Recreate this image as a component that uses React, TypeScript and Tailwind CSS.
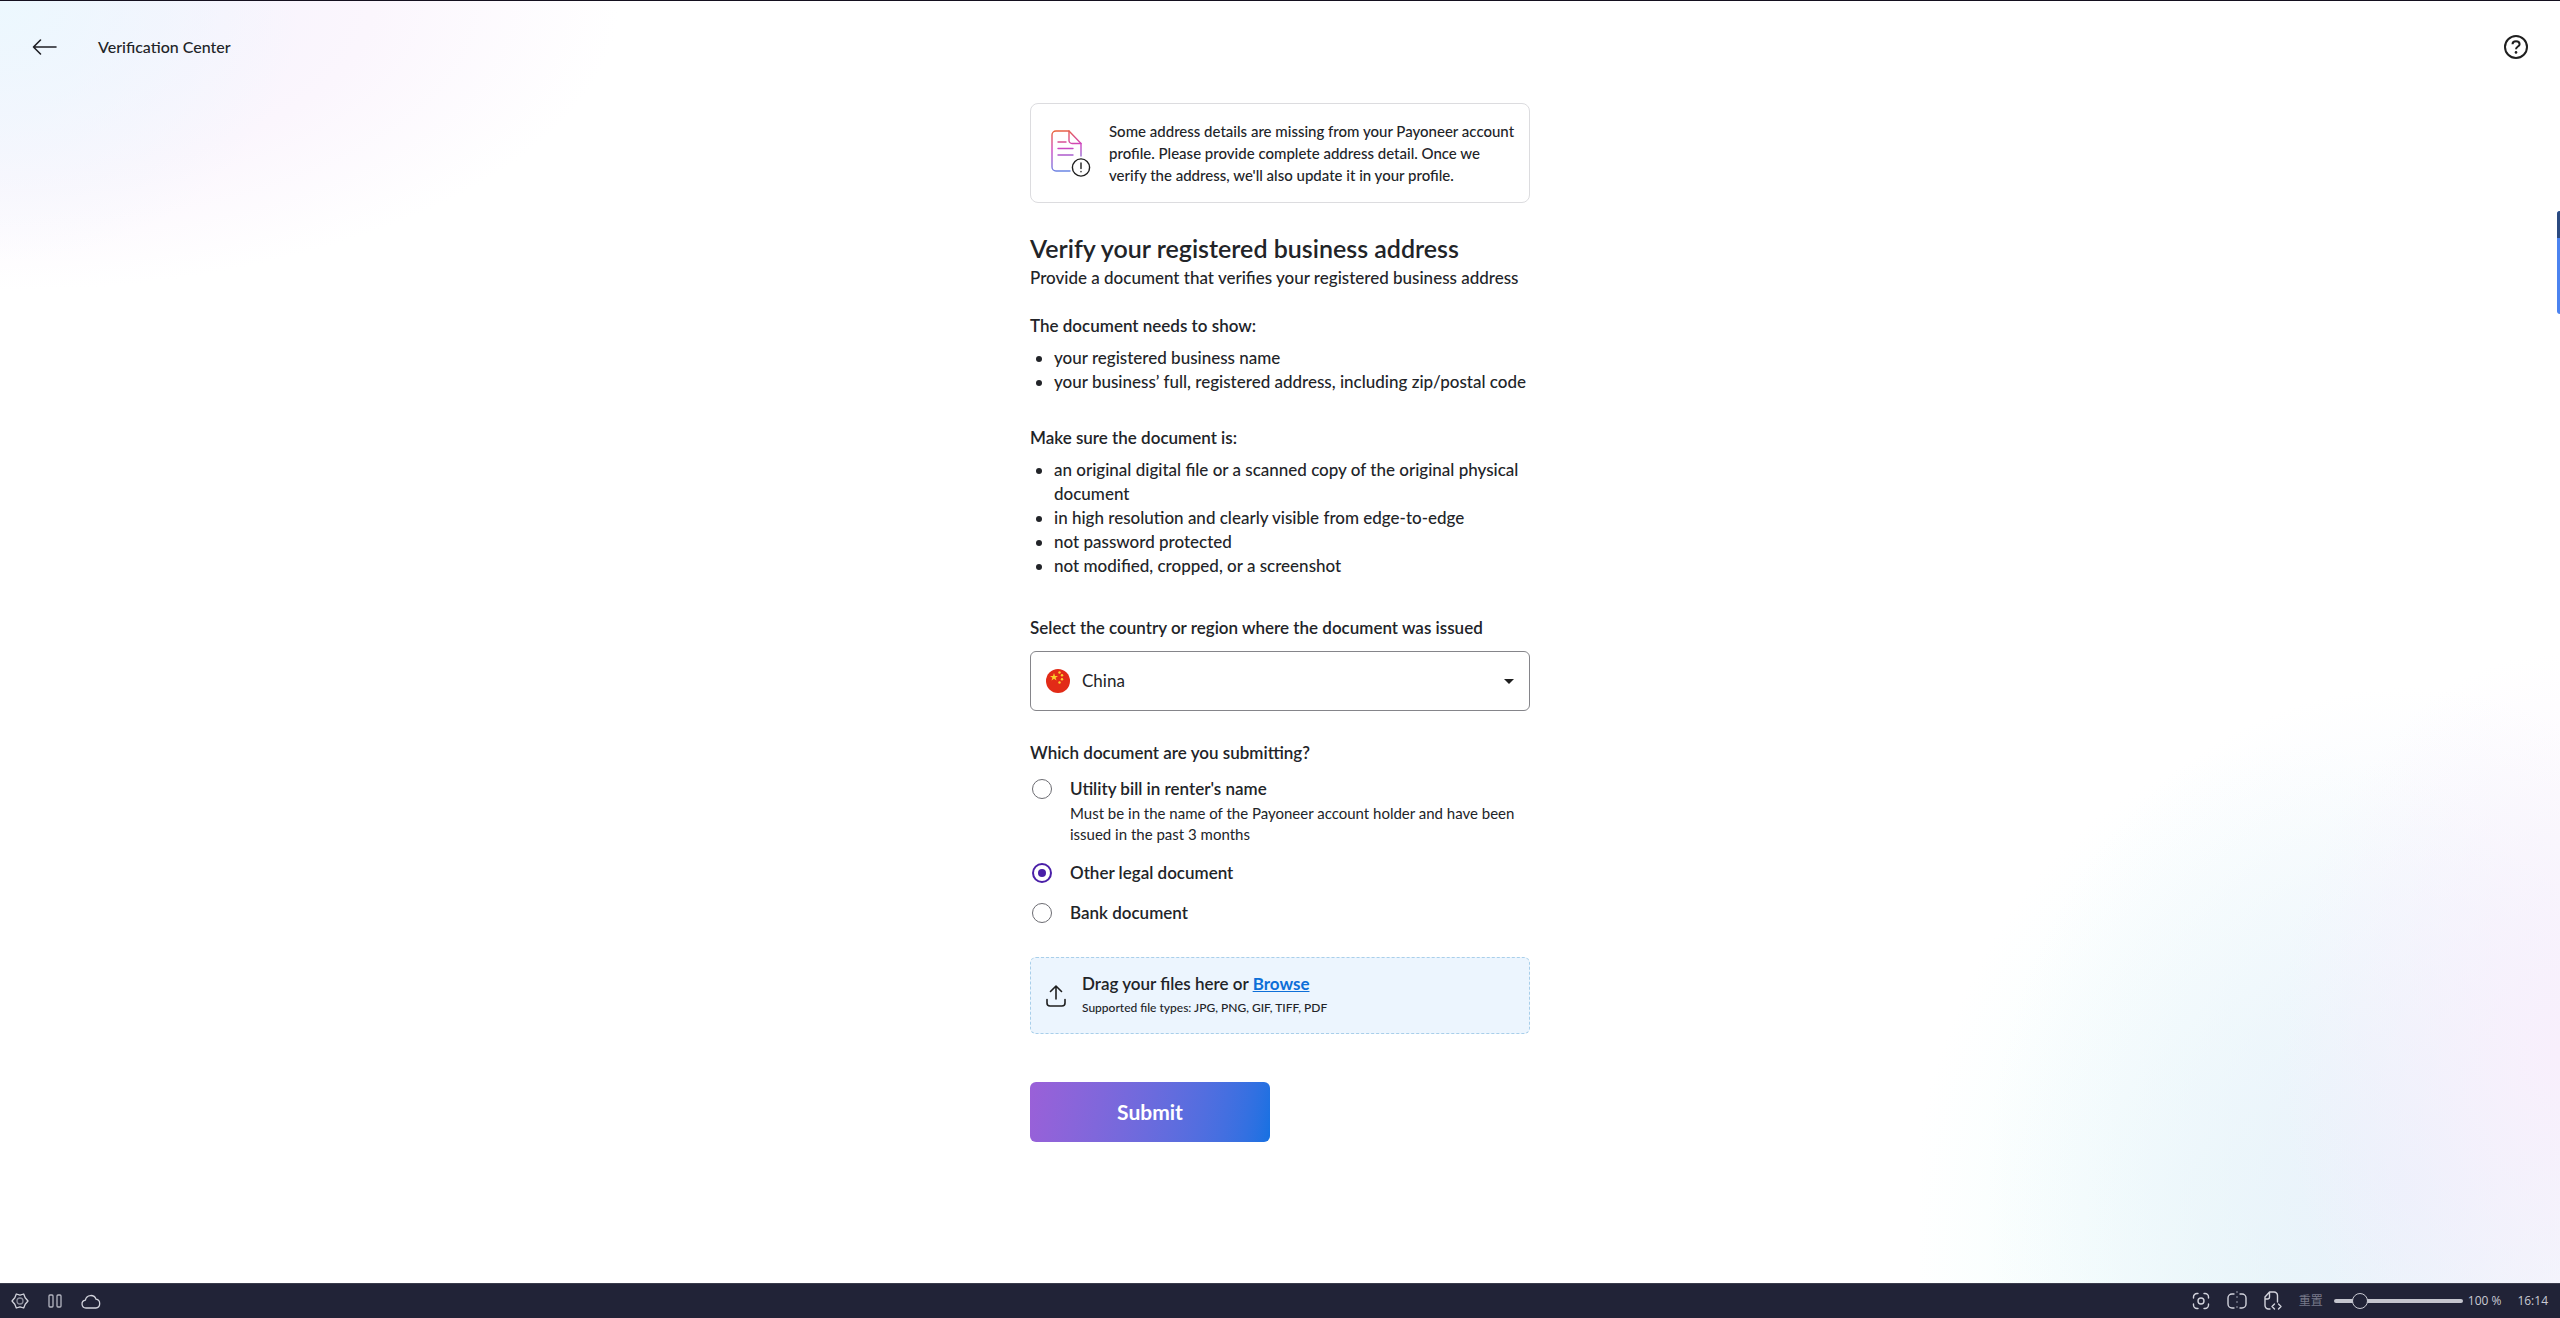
import React, { useState } from "react";

const LIST_ONE = ["your registered business name", "your business’ full, registered address, including zip/postal code"];
const LIST_TWO = [
  "an original digital file or a scanned copy of the original physical document",
  "in high resolution and clearly visible from edge-to-edge",
  "not password protected",
  "not modified, cropped, or a screenshot",
];

const OPTIONS = [
  {
    id: "utility",
    label: "Utility bill in renter's name",
    hint: "Must be in the name of the Payoneer account holder and have been issued in the past 3 months",
  },
  { id: "other", label: "Other legal document" },
  { id: "bank", label: "Bank document" },
];

function BackArrow() {
  return (
    <svg width="26" height="18" viewBox="0 0 26 18" fill="none" stroke="#1f1f24" strokeWidth="1.6" strokeLinecap="round" strokeLinejoin="round">
      <path d="M24 9H1.5M8.5 2 1.5 9l7 7" />
    </svg>
  );
}

function HelpIcon() {
  return (
    <svg width="26" height="26" viewBox="0 0 26 26" fill="none" stroke="#1f1f1f" strokeWidth="2">
      <circle cx="13" cy="13" r="11" />
      <path d="M9.5 10.2c0-1.8 1.4-2.9 3.500-2.900s3.600 1.100 3.600 2.900c0 2.400-3.600 2.300-3.600 5" />
      <circle cx="13" cy="18.4" r="1.3" fill="#1f1f1f" stroke="none" />
    </svg>
  );
}

function DocumentAlertIcon() {
  return (
    <svg className="shrink-0" width="42" height="50" viewBox="0 0 42 50" fill="none" strokeWidth="1.4" strokeLinecap="round" strokeLinejoin="round">
      <defs>
        <linearGradient id="doc" x1="2" y1="3" x2="10" y2="43" gradientUnits="userSpaceOnUse">
          <stop offset="0" stopColor="#ea6438" />
          <stop offset="0.45" stopColor="#cf45c0" />
          <stop offset="1" stopColor="#6a86e4" />
        </linearGradient>
      </defs>
      <g stroke="url(#doc)">
        <path d="M19 43H5a4 4 0 0 1-4-4V7a4 4 0 0 1 4-4h13l12 12.500V28" />
        <path d="M18 3v9.500a3 3 0 0 0 3 3h9" />
        <path d="M7 14h8M7 20.500h15M7 27h15" />
      </g>
      <g stroke="#1f1f1f">
        <circle cx="30" cy="39.500" r="8.600" />
        <path d="M30 35v5.500M30 43.500v.3" />
      </g>
    </svg>
  );
}

function ChinaFlag() {
  return (
    <svg width="24" height="24" viewBox="0 0 24 24">
      <circle cx="12" cy="12" r="12" fill="#e22b17" />
      <g fill="#fbd02c">
        <path d="M8 4l1 2.900h3l-2.400 1.800.9 2.900L8 9.800l-2.500 1.800.9-2.900L4 6.900h3z" />
        <circle cx="13.500" cy="3.500" r="1.200" />
        <circle cx="16" cy="6.200" r="1.200" />
        <circle cx="16" cy="10.200" r="1.200" />
        <circle cx="13.500" cy="13.500" r="1.200" />
      </g>
    </svg>
  );
}

function UploadIcon() {
  return (
    <svg width="20" height="22" viewBox="0 0 20 22" fill="none" stroke="#1f1f1f" strokeWidth="1.6" strokeLinecap="round" strokeLinejoin="round">
      <path d="M10 14V1.500M4.500 6.500 10 1l5.500 5.500" />
      <path d="M1 14.500V18a3 3 0 0 0 3 3h12a3 3 0 0 0 3-3v-3.500" />
    </svg>
  );
}

function BottomBar() {
  const [zoom, setZoom] = useState(16);
  return (
    <footer className="flex h-[35px] shrink-0 items-center justify-between border-t border-[#3a3c4c] bg-[#212337] pl-[11px] pr-3 font-['Open_Sans','Noto_Sans_CJK_SC',sans-serif] text-xs text-[#c9cad3]">
      <div className="flex items-center gap-[19px]">
        <button type="button" aria-label="Settings">
          <svg width="18" height="16" viewBox="0 0 18 16" fill="none" stroke="#d2d3dc" strokeWidth="1.300" strokeLinejoin="round">
            <path d="M5.300 1 9 2.200 12.700 1 14.200 4.800 17 8l-2.800 3.200L12.700 15 9 13.800 5.300 15l-1.500-3.800L1 8l2.800-3.200z" />
            <circle cx="9" cy="8" r="3" stroke="#8b8d9b" />
          </svg>
        </button>
        <button type="button" aria-label="Pause">
          <svg width="14" height="14" viewBox="0 0 14 14" fill="none" stroke="#b4b5c0" strokeWidth="1.300">
            <rect x="1" y="1" width="4" height="12" rx="1" />
            <rect x="9" y="1" width="4" height="12" rx="1" />
          </svg>
        </button>
        <button type="button" aria-label="Cloud">
          <svg width="20" height="15" viewBox="0 0 20 15" fill="none" stroke="#d2d3dc" strokeWidth="1.300" strokeLinejoin="round">
            <path d="M5 14a4 4 0 0 1-.6-7.950A5.500 5.500 0 0 1 15 5.200 4.450 4.450 0 0 1 14.800 14z" />
          </svg>
        </button>
      </div>
      <div className="flex items-center">
        <div className="flex items-center gap-[17px]">
          <button type="button" aria-label="Capture">
            <svg width="18" height="18" viewBox="0 0 18 18" fill="none" stroke="#d2d3dc" strokeWidth="1.400" strokeLinecap="round">
              <path d="M1.500 6V5A3.500 3.500 0 0 1 5 1.500h1M12 1.500h1A3.500 3.500 0 0 1 16.500 5v1M16.500 12v1a3.500 3.500 0 0 1-3.500 3.500h-1M6 16.500H5A3.500 3.500 0 0 1 1.500 13v-1" />
              <circle cx="9" cy="9" r="3" />
            </svg>
          </button>
          <button type="button" aria-label="Split view">
            <svg width="20" height="20" viewBox="0 0 20 20" fill="none" stroke="#d2d3dc" strokeWidth="1.400" strokeLinecap="round">
              <path d="M7 3H5a4 4 0 0 0-4 4v6a4 4 0 0 0 4 4h2M13 3h2a4 4 0 0 1 4 4v6a4 4 0 0 1-4 4h-2" />
              <path d="M10 0v20" stroke="#777989" strokeDasharray="2 3" strokeLinecap="butt" />
            </svg>
          </button>
          <button type="button" aria-label="Page source">
            <svg width="18" height="20" viewBox="0 0 18 20" fill="none" stroke="#d2d3dc" strokeWidth="1.400" strokeLinecap="round" strokeLinejoin="round">
              <path d="M6 18H4.500A3.500 3.500 0 0 1 1 14.500V6l4.500-5H10a3.500 3.500 0 0 1 3.500 3.500V11M1 8h2.500A2 2 0 0 0 5.500 6V1" />
              <path d="m10.500 13-2.500 2.500L10.500 18M14.500 13l2.500 2.500-2.500 2.500" />
            </svg>
          </button>
        </div>
        <button type="button" className="ml-[17px] text-[#777989]">重置</button>
        <input
          type="range"
          aria-label="Zoom"
          min={0}
          max={100}
          value={zoom}
          onChange={(e) => setZoom(Number(e.target.value))}
          className="ml-[11px] h-4 w-[129px] appearance-none bg-transparent [&::-webkit-slider-runnable-track]:h-1 [&::-webkit-slider-runnable-track]:rounded-full [&::-webkit-slider-runnable-track]:bg-[#c4c5ce] [&::-webkit-slider-thumb]:-mt-1.5 [&::-webkit-slider-thumb]:size-4 [&::-webkit-slider-thumb]:appearance-none [&::-webkit-slider-thumb]:rounded-full [&::-webkit-slider-thumb]:border [&::-webkit-slider-thumb]:border-[#c9cad3] [&::-webkit-slider-thumb]:bg-[#212337]"
        />
        <span className="ml-[5px]">100 %</span>
        <time className="ml-4">16:14</time>
      </div>
    </footer>
  );
}

export default function App() {
  const [selected, setSelected] = useState("other");
  return (
    <div className="relative flex min-h-screen flex-col border-t border-[#14101f] bg-white font-[Lato,sans-serif] text-[17px] text-[#222428]">
      <div className="pointer-events-none absolute inset-x-0 top-0 h-[300px] bg-[radial-gradient(ellipse_300px_260px_at_0_0,#ecf8fe,transparent),radial-gradient(ellipse_620px_290px_at_0_0,#f3f1fd_0%,#fbf6fd_60%,transparent_100%)]" />
      <div className="pointer-events-none absolute bottom-[35px] right-0 h-[640px] w-[640px] bg-[radial-gradient(ellipse_280px_400px_at_100%_64%,#f8effc,transparent),radial-gradient(ellipse_420px_500px_at_76%_85%,#e9f1fb,transparent),radial-gradient(ellipse_390px_540px_at_58%_100%,#e9fbf8_0%,#f6fefd_55%,transparent_100%)]" />

      <header className="relative flex h-[91px] items-center justify-between pl-8 pr-[31px]">
        <div className="flex items-center gap-10">
          <button type="button" aria-label="Back"><BackArrow /></button>
          <span className="text-base font-medium">Verification Center</span>
        </div>
        <button type="button" aria-label="Help"><HelpIcon /></button>
      </header>

      <main className="relative mx-auto w-full max-w-[500px] grow pt-[11px]">
        <section className="flex min-h-[100px] items-center gap-4 rounded-lg border border-[#dcdcdf] bg-white pl-5 pr-3">
          <DocumentAlertIcon />
          <p className="text-[15px] leading-[22px] font-medium">
            Some address details are missing from your Payoneer account profile. Please provide complete address detail. Once we verify the address, we'll also update it in your profile.
          </p>
        </section>

        <h1 className="mt-7 text-[25px] leading-[35px] font-semibold">Verify your registered business address</h1>
        <p className="leading-6 font-medium">Provide a document that verifies your registered business address</p>

        <h2 className="mt-6 leading-6 font-semibold">The document needs to show:</h2>
        <ul className="mt-2 list-disc pl-6 leading-6 font-medium">
          {LIST_ONE.map((t) => <li key={t}>{t}</li>)}
        </ul>

        <h2 className="mt-8 leading-6 font-semibold">Make sure the document is:</h2>
        <ul className="mt-2 list-disc pl-6 leading-6 font-medium">
          {LIST_TWO.map((t) => <li key={t}>{t}</li>)}
        </ul>

        <label htmlFor="country" className="mt-[38px] block leading-6 font-semibold">
          Select the country or region where the document was issued
        </label>
        <div className="relative mt-[11px]">
          <select id="country" defaultValue="China" className="h-[60px] w-full appearance-none rounded-md border border-[#85858a] bg-white pl-[51px] pr-10 text-[17px] font-normal">
            <option>China</option>
          </select>
          <span className="pointer-events-none absolute inset-y-0 left-4 flex items-center"><ChinaFlag /></span>
          <span className="pointer-events-none absolute inset-y-0 right-4 flex items-center">
            <svg width="10" height="5" viewBox="0 0 10 5"><path d="M0 0h10L5 5z" fill="#1f1f1f" /></svg>
          </span>
        </div>

        <fieldset className="mt-[30px]">
          <legend className="leading-6 font-semibold">Which document are you submitting?</legend>
          <div className="mt-3 flex flex-col gap-4">
            {OPTIONS.map((o) => (
              <div key={o.id} className="flex gap-[18px]">
                <input
                  type="radio"
                  id={o.id}
                  name="document"
                  checked={selected === o.id}
                  onChange={() => setSelected(o.id)}
                  className="ml-0.5 mt-0.5 grid size-5 shrink-0 appearance-none place-content-center rounded-full border border-[#6c6c72] bg-white before:size-2 before:rounded-full checked:border-2 checked:border-[#4a1fa8] checked:before:bg-[#4a1fa8]"
                />
                <div>
                  <label htmlFor={o.id} className="block leading-6 font-semibold">{o.label}</label>
                  {o.hint && <p className="mt-0.5 pr-3 text-[15px] leading-[21px]">{o.hint}</p>}
                </div>
              </div>
            ))}
          </div>
        </fieldset>

        <section className="mt-8 flex h-[77px] items-center gap-4 rounded-md border border-dashed border-[#a9cfea] bg-[#ecf5fe] pl-[15px]">
          <UploadIcon />
          <div>
            <p className="leading-6 font-semibold">Drag your files here or <a href="#browse" className="font-bold text-[#0d6fd8] underline">Browse</a></p>
            <p className="text-xs leading-6 font-medium">Supported file types: JPG, PNG, GIF, TIFF, PDF</p>
          </div>
        </section>

        <button type="button" className="mt-12 h-[60px] w-60 rounded-md bg-linear-100 from-[#9a60d8] to-[#1471e2] text-[21px] font-bold text-white">Submit</button>
      </main>

      <button type="button" aria-label="Open side panel" className="absolute right-0 top-[210px] flex h-[103px] w-[3px] flex-col overflow-hidden rounded-l-sm bg-[#4b83f0]">
        <span className="h-[27px] w-full bg-[#2b4a80]" />
      </button>

      <BottomBar />
    </div>
  );
}
